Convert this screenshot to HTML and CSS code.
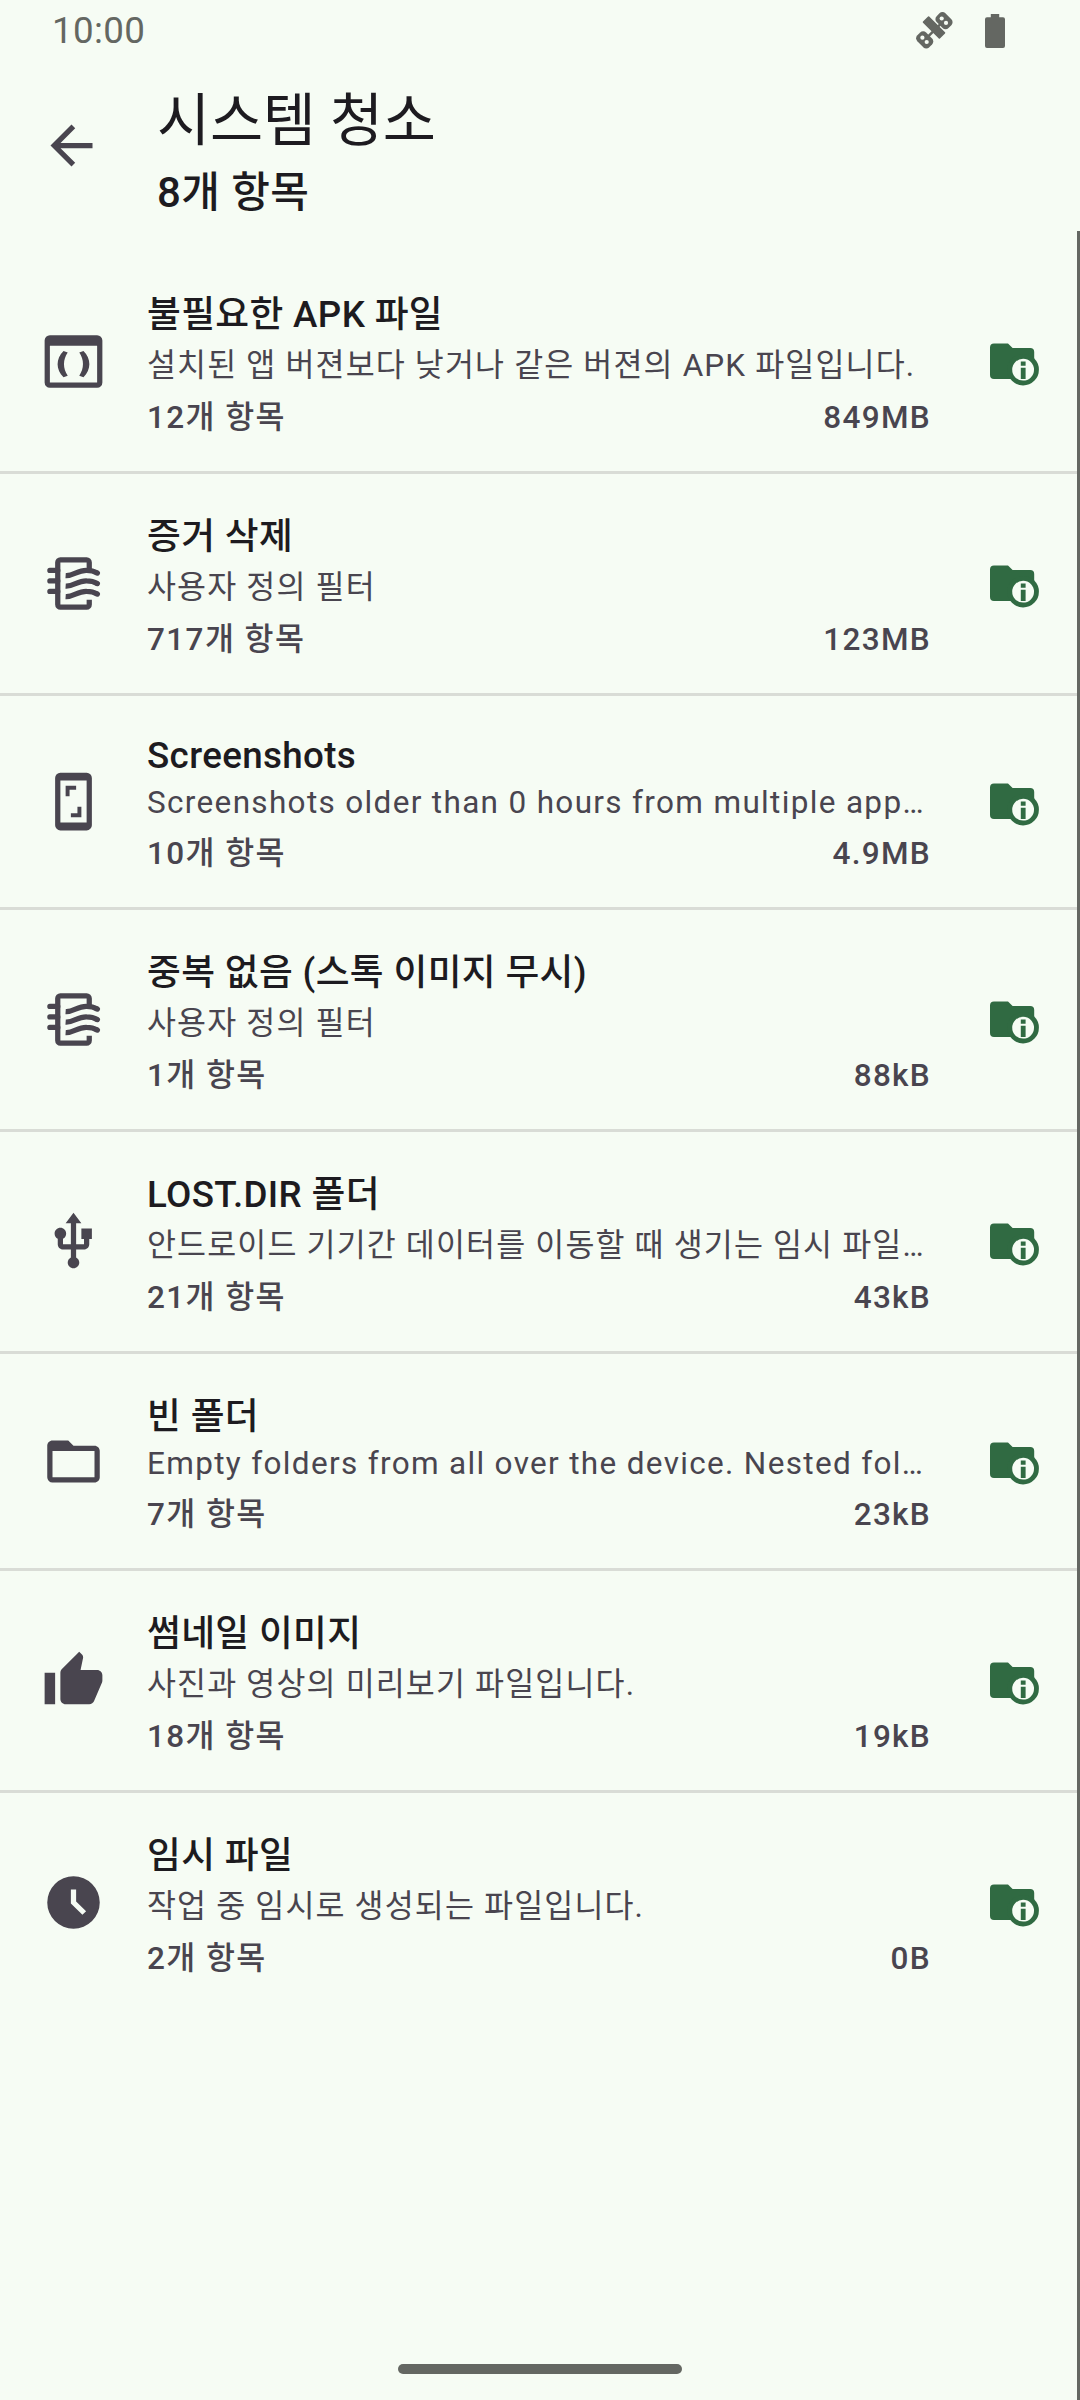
FILE: index.html
```html
<!DOCTYPE html>
<html lang="ko">
<head>
<meta charset="utf-8">
<title>시스템 청소</title>
<link rel="stylesheet" href="styles.css">
</head>
<body>
<svg class="defs" width="0" height="0">
  <symbol id="folder-info" viewBox="0 0 49 43">
    <path class="green" d="M4 0.4H18L22.6 5H40.2A4 4 0 0 1 44.2 9V26L30 36H4A4 4 0 0 1 0 32V4.4A4 4 0 0 1 4 0.4Z"/>
    <circle class="green" cx="33.1" cy="26.7" r="15.8"/>
    <circle class="paper" cx="33.1" cy="26.7" r="10.9"/>
    <path class="green" d="M30.8 18.4H35.6V22.8H30.8ZM30.8 24.8H35.6V36H30.8Z"/>
  </symbol>
  <symbol id="filter" viewBox="0 0 24 24">
    <g fill="none" stroke="currentColor" stroke-width="2">
      <path d="M18 7V4A1 1 0 0 0 17 3H7A1 1 0 0 0 6 4V20A1 1 0 0 0 7 21H17A1 1 0 0 0 18 20V18.2"/>
      <path stroke-linecap="round" d="M6 7H3M6 11H3M6 15H3"/>
      <path d="M9 9C12 9.2 13.5 6.9 17 7C19 7 20 7.4 21 8M9 13C12 13.2 13.5 10.9 17 11C19 11 20 11.4 21 12M9 17C12 17.2 13.5 14.9 17 15C19 15 20 15.4 21 16"/>
      <path stroke-linecap="round" d="M20.9 7.95L21.1 8.05M20.9 11.95L21.1 12.05M20.9 15.95L21.1 16.05"/>
    </g>
  </symbol>
</svg>
<div class="screen">
  <div class="status">
    <span class="time">10:00</span>
    <div class="status-icons">
      <svg width="37" height="37" viewBox="0 0 37 37">
        <g transform="translate(18 15.5) rotate(45)" fill="currentColor">
          <rect x="-12" y="-4.4" width="24" height="8.8" rx="0.8"/>
        </g>
        <path d="M8.7 27.8L28 8.7" stroke="currentColor" stroke-width="2.6"/>
        <g fill="currentColor">
          <rect x="-8.4" y="-6.2" width="16.8" height="12.4" rx="4.2" transform="translate(8.7 27.9) rotate(45)"/>
          <rect x="-8.4" y="-6.2" width="16.8" height="12.4" rx="4.2" transform="translate(28 8.7) rotate(45)"/>
        </g>
        <g class="paper">
          <circle cx="6.4" cy="25.7" r="2.1"/><circle cx="10.7" cy="30" r="2.1"/>
          <circle cx="25.7" cy="6.5" r="2.1"/><circle cx="30" cy="10.9" r="2.1"/>
        </g>
      </svg>
      <svg width="20" height="34" viewBox="0 0 20 34"><path fill="currentColor" d="M5.8 0H14.2V3.3H18A2 2 0 0 1 20 5.3V32A2 2 0 0 1 18 34H2A2 2 0 0 1 0 32V5.3A2 2 0 0 1 2 3.3H5.8Z"/></svg>
    </div>
  </div>
  <header class="header">
    <svg class="icon" viewBox="0 0 24 24"><path d="M20 11H7.83l5.59-5.59L12 4l-8 8 8 8 1.41-1.41L7.83 13H20v-2z"/></svg>
    <div class="heading">
      <h1>시스템 청소</h1>
      <p>8개 항목</p>
    </div>
  </header>
  <main class="list">
    <section class="row">
      <svg class="icon" viewBox="0 0 24 24"><path fill-rule="evenodd" d="M21 2H3A2 2 0 0 0 1 4V20A2 2 0 0 0 3 22H21A2 2 0 0 0 23 20V4A2 2 0 0 0 21 2M21 20H3V6H21Z"/><path d="M8.2 8C5.2 11 5.2 15 8.2 18L9.8 17.4C7.9 14.6 7.9 11.4 9.8 8.6ZM15.8 8C18.8 11 18.8 15 15.8 18L14.2 17.4C16.1 14.6 16.1 11.4 14.2 8.6Z"/></svg>
      <div class="text"><h2 class="ko">불필요한 APK 파일</h2><p class="desc ko">설치된 앱 버젼보다 낮거나 같은 버젼의 APK 파일입니다.</p><div class="meta"><span>12개 항목</span><span class="size">849MB</span></div></div>
      <svg class="info"><use href="#folder-info"/></svg>
    </section>
    <section class="row">
      <svg class="icon"><use href="#filter"/></svg>
      <div class="text"><h2 class="ko">증거 삭제</h2><p class="desc ko">사용자 정의 필터</p><div class="meta"><span>717개 항목</span><span class="size">123MB</span></div></div>
      <svg class="info"><use href="#folder-info"/></svg>
    </section>
    <section class="row">
      <svg class="icon" viewBox="0 0 24 24"><path fill-rule="evenodd" d="M17 1H7A2 2 0 0 0 5 3V21A2 2 0 0 0 7 23H17A2 2 0 0 0 19 21V3A2 2 0 0 0 17 1M17 20H7V4H17Z"/><path d="M9 6H13V7.5H10.5V10H9ZM15 18H11V16.5H13.5V14H15Z"/></svg>
      <div class="text"><h2>Screenshots</h2><p class="desc">Screenshots older than 0 hours from multiple app…</p><div class="meta"><span>10개 항목</span><span class="size">4.9MB</span></div></div>
      <svg class="info"><use href="#folder-info"/></svg>
    </section>
    <section class="row">
      <svg class="icon"><use href="#filter"/></svg>
      <div class="text"><h2 class="ko">중복 없음 (스톡 이미지 무시)</h2><p class="desc ko">사용자 정의 필터</p><div class="meta"><span>1개 항목</span><span class="size">88kB</span></div></div>
      <svg class="info"><use href="#folder-info"/></svg>
    </section>
    <section class="row">
      <svg class="icon" viewBox="0 0 24 24"><path d="M15 7v4h1v2h-3V5h2l-3-4-3 4h2v8H8v-2.07c.7-.37 1.2-1.08 1.2-1.93 0-1.21-.99-2.2-2.2-2.2-1.21 0-2.2.99-2.2 2.2 0 .85.5 1.56 1.2 1.93V13c0 1.11.89 2 2 2h3v3.05c-.71.37-1.2 1.1-1.2 1.95 0 1.22.99 2.2 2.2 2.2 1.21 0 2.2-.98 2.2-2.2 0-.85-.49-1.58-1.2-1.95V15h3c1.11 0 2-.89 2-2v-2h1V7h-4z"/></svg>
      <div class="text"><h2 class="ko">LOST.DIR 폴더</h2><p class="desc ko">안드로이드 기기간 데이터를 이동할 때 생기는 임시 파일…</p><div class="meta"><span>21개 항목</span><span class="size">43kB</span></div></div>
      <svg class="info"><use href="#folder-info"/></svg>
    </section>
    <section class="row">
      <svg class="icon" viewBox="0 0 24 24"><path d="M20 18H4V8H20M20 6H12L10 4H4C2.89 4 2 4.89 2 6V18A2 2 0 0 0 4 20H20C21.11 20 22 19.1 22 18V8C22 6.89 21.1 6 20 6Z"/></svg>
      <div class="text"><h2 class="ko">빈 폴더</h2><p class="desc">Empty folders from all over the device. Nested fol…</p><div class="meta"><span>7개 항목</span><span class="size">23kB</span></div></div>
      <svg class="info"><use href="#folder-info"/></svg>
    </section>
    <section class="row">
      <svg class="icon" viewBox="0 0 24 24"><path d="M1 21h4V9H1v12zm22-11c0-1.1-.9-2-2-2h-6.31l.95-4.57.03-.32c0-.41-.17-.79-.44-1.06L14.17 1 7.59 7.59C7.22 7.95 7 8.45 7 9v10c0 1.1.9 2 2 2h9c.83 0 1.54-.5 1.84-1.22l3.02-7.05c.09-.23.14-.47.14-.73v-2z"/></svg>
      <div class="text"><h2 class="ko">썸네일 이미지</h2><p class="desc ko">사진과 영상의 미리보기 파일입니다.</p><div class="meta"><span>18개 항목</span><span class="size">19kB</span></div></div>
      <svg class="info"><use href="#folder-info"/></svg>
    </section>
    <section class="row">
      <svg class="icon" viewBox="0 0 24 24"><path fill-rule="evenodd" d="M12 2A10 10 0 1 0 12 22A10 10 0 1 0 12 2ZM11 7H13V11.6L16.8 15.3L15.4 16.7L11 12.4Z"/></svg>
      <div class="text"><h2 class="ko">임시 파일</h2><p class="desc ko">작업 중 임시로 생성되는 파일입니다.</p><div class="meta"><span>2개 항목</span><span class="size">0B</span></div></div>
      <svg class="info"><use href="#folder-info"/></svg>
    </section>
  </main>
  <footer class="nav"><div class="handle"></div></footer>
  <div class="scrollbar"></div>
</div>
</body>
</html>
```

FILE: styles.css
```css
* { box-sizing: border-box; margin: 0; padding: 0; }
body {
  background: #f6fcf4;
  color: #1d1b20;
  font-family: Roboto, "Noto Sans CJK KR", sans-serif;
}
.defs { position: absolute; }
.green { fill: #306a42; }
.paper { fill: #f6fcf4; }
.screen {
  position: relative;
  display: flex;
  flex-direction: column;
  width: 1080px;
  height: 2400px;
  overflow: hidden;
}
.status {
  display: flex;
  justify-content: space-between;
  height: 63px;
  padding: 9px 75px 0 52px;
  color: #646762;
}
.time { font-size: 36.75px; line-height: 44px; letter-spacing: 0.35px; }
.status-icons { display: flex; gap: 32px; padding-top: 3px; }
.status-icons svg:last-child { margin-top: 2px; }
.header {
  display: flex;
  align-items: flex-start;
  height: 168px;
  padding-left: 40px;
}
.icon {
  width: 63px;
  height: 63px;
  flex: none;
  color: #49454f;
  fill: currentColor;
}
.header .icon { margin-top: 51px; }
.heading { padding: 21px 0 0 54px; white-space: nowrap; }
h1 { font-size: 57.75px; font-weight: 400; line-height: 75px; letter-spacing: -0.2px; }
.heading p { font-size: 42px; font-weight: 500; line-height: 67px; letter-spacing: 0.4px; }
.list { padding-top: 21px; flex: 1; }
.row {
  display: flex;
  align-items: center;
  padding: 38px 41px 26px 42px;
  border-bottom: 3px solid #d9dcd6;
}
.row:last-child { border-bottom: 0; }
/* Icons centre on the whole row, whose top padding is the larger one. */
.row .icon { margin: -12px 42px 0 0; }
.text { flex: 1; min-width: 0; white-space: nowrap; }
h2 {
  font-size: 36.75px;
  font-weight: 500;
  line-height: 43px;
  letter-spacing: 0.35px;
}
h2.ko { padding-top: 3px; }
.desc {
  padding-top: 1px;
  font-size: 31.5px;
  line-height: 49px;
  letter-spacing: 1.33px;
  color: #49454f;
}
.desc.ko { padding: 5px 0 1px; letter-spacing: 1.14px; }
.meta {
  display: flex;
  justify-content: space-between;
  font-size: 31.5px;
  font-weight: 500;
  line-height: 54px;
  letter-spacing: 1.4px;
  color: #49454f;
}
.size { letter-spacing: 1.3px; }
.info { width: 49px; height: 43px; flex: none; margin: -7px 0 0 59px; }
.nav { display: flex; justify-content: center; height: 36px; }
.handle { width: 284px; height: 10px; border-radius: 5px; background: #646762; }
.scrollbar {
  position: absolute;
  top: 231px;
  right: 0;
  bottom: 0;
  width: 3px;
  background: #646762;
}
```
